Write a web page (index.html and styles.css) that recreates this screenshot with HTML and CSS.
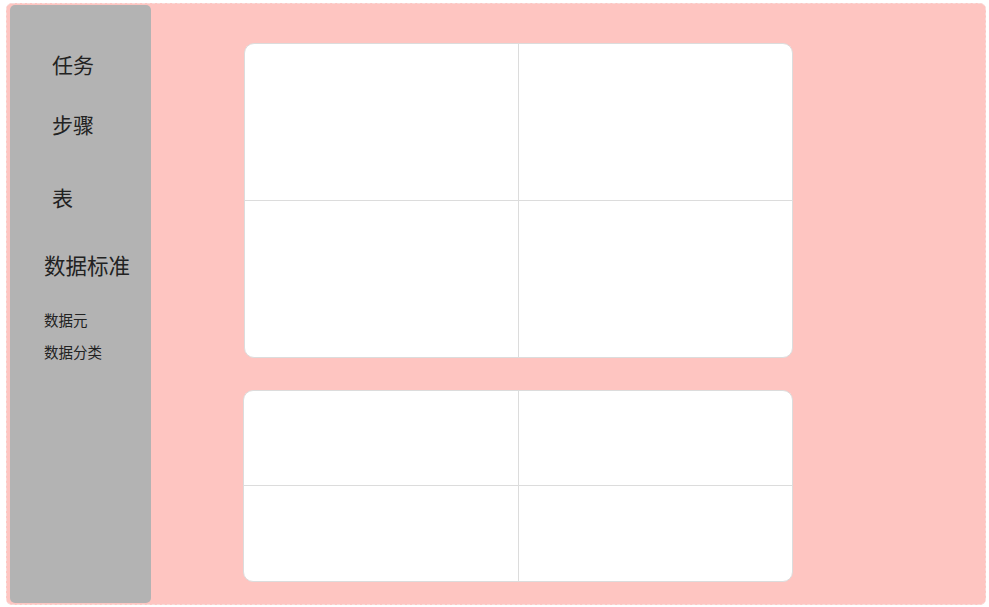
FILE: index.html
```html
<!DOCTYPE html>
<html lang="zh-CN">
<head>
    <meta charset="UTF-8">
    <meta name="viewport" content="width=device-width, initial-scale=1.0">
    <title>数据标准</title>
    <link rel="stylesheet" href="styles.css">
</head>
<body>
    <div class="page">
        <aside class="sidebar">
            <div class="menu-item item-task">任务</div>
            <div class="menu-item item-step">步骤</div>
            <div class="menu-item item-table">表</div>
            <div class="menu-group">数据标准</div>
            <div class="sub-item">数据元</div>
            <div class="sub-item">数据分类</div>
        </aside>
        <main class="content">
            <div class="card card-big">
                <div class="cell"></div>
                <div class="cell"></div>
                <div class="cell"></div>
                <div class="cell"></div>
            </div>
            <div class="card card-small">
                <div class="cell"></div>
                <div class="cell"></div>
                <div class="cell"></div>
                <div class="cell"></div>
            </div>
        </main>
    </div>
</body>
</html>
```

FILE: styles.css
```css
body {
    margin: 0;
    background-color: #ffffff;
    font-family: "Noto Sans CJK SC", "Noto Sans", sans-serif;
    color: #222;
}
.page {
    display: flex;
    box-sizing: border-box;
    width: 980px;
    height: 602px;
    margin: 3px 0 0 6px;
    padding: 1px 0 1px 3px;
    background-color: #fec5c1;
    border: 1px dashed #f7dcda;
    border-radius: 6px;
}
.sidebar {
    box-sizing: border-box;
    width: 141px;
    flex-shrink: 0;
    background-color: #b3b3b3;
    border-radius: 5px;
    padding: 44px 0 0 0;
}
.menu-item {
    font-size: 21px;
    line-height: 30px;
    padding-left: 42px;
}
.item-step {
    margin-top: 30px;
}
.item-table {
    margin-top: 43px;
}
.menu-group {
    margin-top: 38px;
    padding-left: 34px;
    font-size: 21.5px;
    line-height: 30px;
}
.sub-item {
    padding-left: 34px;
    font-size: 14.5px;
    line-height: 20px;
}
.menu-group + .sub-item {
    margin-top: 30px;
}
.sub-item + .sub-item {
    margin-top: 12px;
}
.content {
    display: flex;
    flex-direction: column;
    gap: 32px;
    padding: 38px 0 0 93px;
}
.card {
    box-sizing: border-box;
    display: grid;
    grid-template-columns: 274px 1fr;
    grid-template-rows: 1fr 1fr;
    width: 549px;
    background-color: #ffffff;
    border: 1px solid #dcdcdc;
    border-radius: 10px;
    overflow: hidden;
}
.card-big {
    height: 315px;
}
.card-small {
    height: 192px;
    margin-left: -1px;
    width: 550px;
    grid-template-columns: 275px 1fr;
}
.cell {
    border-right: 1px solid #dcdcdc;
    border-bottom: 1px solid #dcdcdc;
}
.cell:nth-child(2n) {
    border-right: none;
}
.cell:nth-child(n+3) {
    border-bottom: none;
}
```
